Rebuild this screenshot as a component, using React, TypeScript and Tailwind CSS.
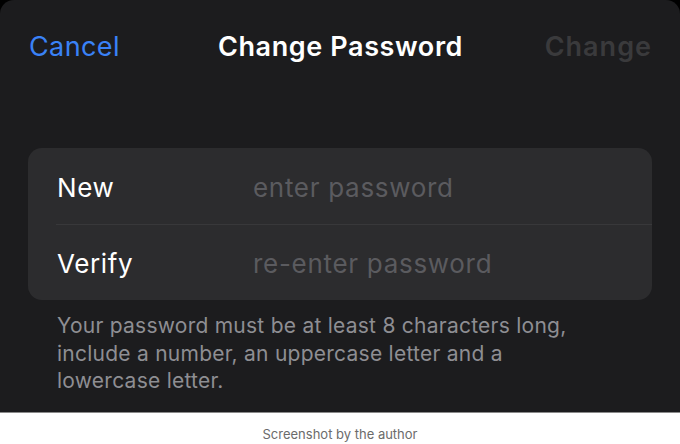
export default function App() {
  return (
    <div className="w-[680px] h-[444px] bg-black flex flex-col font-['Inter','Liberation_Sans',sans-serif] overflow-hidden">
      {/* Sheet */}
      <div className="h-[412px] bg-[#1c1c1e] rounded-t-[14px] flex flex-col">
        {/* Nav bar */}
        <div className="h-[94px] grid grid-cols-[1fr_auto_1fr] items-center pl-[29px] pr-[28px] pt-[1px]">
          <span className="justify-self-start text-[27px] text-[#3a82f7] tracking-[0.4px]">Cancel</span>
          <span className="text-[27px] font-semibold text-white tracking-[0.6px]">Change Password</span>
          <span className="justify-self-end text-[27px] font-semibold text-[#3a3a3c] tracking-[1px]">Change</span>
        </div>

        {/* Fields */}
        <div className="mt-[54px] mx-[28px] bg-[#2c2c2e] rounded-[14px] flex flex-col">
          <div className="h-[76px] flex items-center pl-[29px] pt-[2px]">
            <span className="w-[196px] text-[26px] text-white tracking-[0.6px]">New</span>
            <span className="text-[26px] text-[#5b5b5f] tracking-[0.7px]">enter password</span>
          </div>
          <div className="ml-[28px] h-px bg-[#38383a]" />
          <div className="h-[75px] flex items-center pl-[29px] pt-[2px]">
            <span className="w-[196px] text-[26px] text-white tracking-[0.6px]">Verify</span>
            <span className="text-[26px] text-[#5b5b5f] tracking-[0.7px]">re-enter password</span>
          </div>
        </div>

        {/* Hint */}
        <p className="mt-[12px] pl-[57px] pr-[80px] text-[21px] leading-[27.5px] tracking-[0.25px] text-[#8e8e93]">
          Your password must be at least 8 characters long, include a number, an uppercase letter and a lowercase letter.
        </p>
      </div>

      {/* Caption */}
      <div className="flex-1 bg-white border-t border-[#8a8a8a] flex justify-center pt-[11px]">
        <span className="text-[13px] leading-[20px] text-[#6b6b6b]">Screenshot by the author</span>
      </div>
    </div>
  );
}
